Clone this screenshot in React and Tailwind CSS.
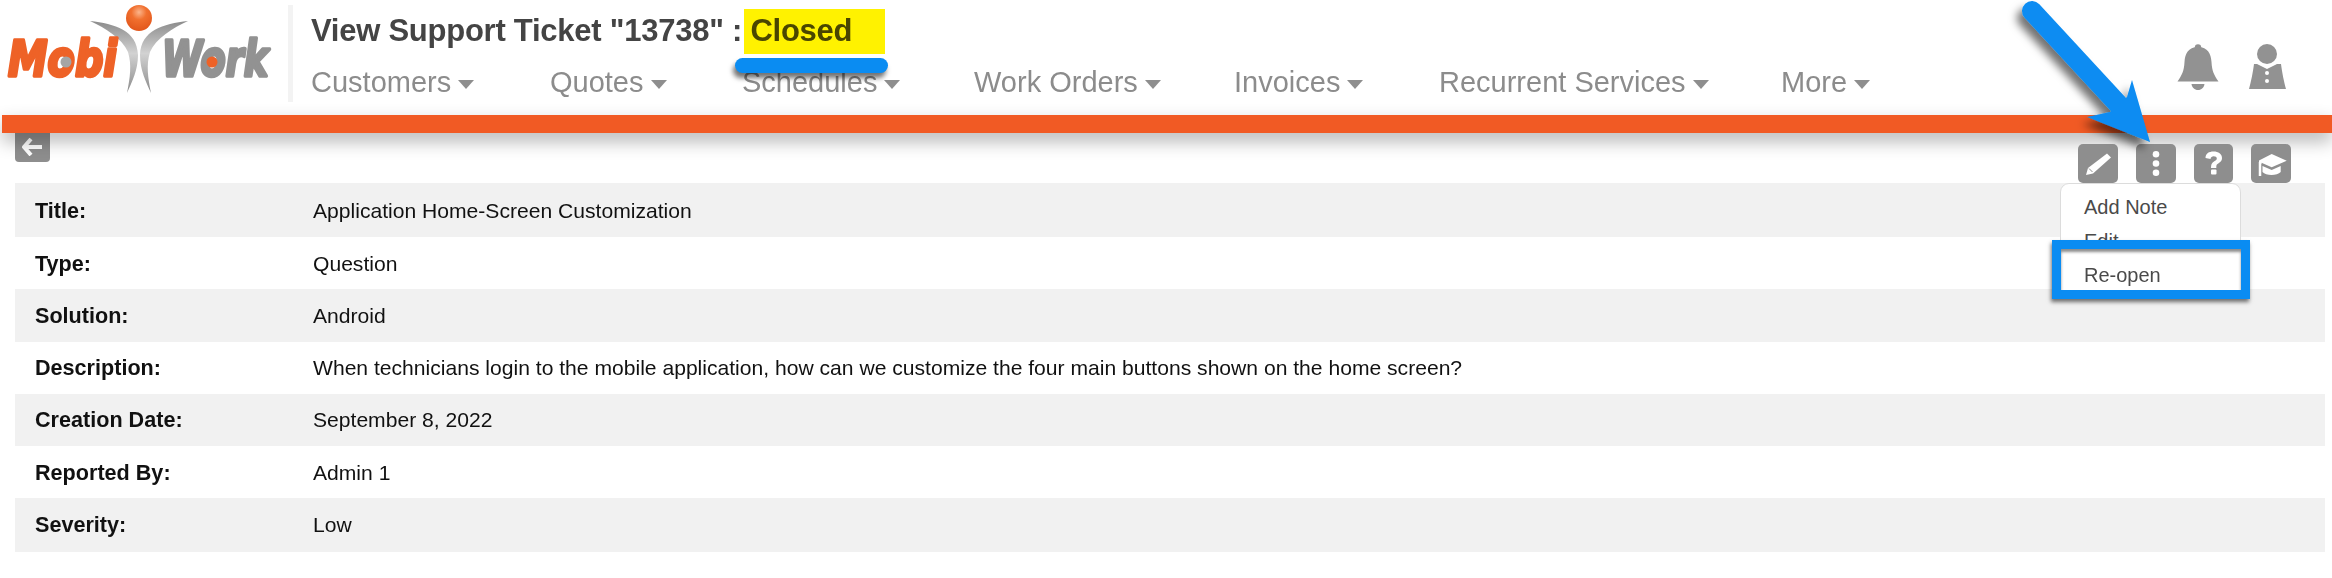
import React from "react";

const navItems = [
  ["Customers", "w-[239px]"],
  ["Quotes", "w-[192px]"],
  ["Schedules", "w-[232px]"],
  ["Work Orders", "w-[260px]"],
  ["Invoices", "w-[205px]"],
  ["Recurrent Services", "w-[342px]"],
  ["More", "w-[100px]"],
];

const rows = [
  ["Title:", "Application Home-Screen Customization", "bg-[#f1f1f1] h-[54px] pt-[2px]"],
  ["Type:", "Question", "bg-white h-[52px] pt-[2px]"],
  ["Solution:", "Android", "bg-[#f1f1f1] h-[53px]"],
  ["Description:", "When technicians login to the mobile application, how can we customize the four main buttons shown on the home screen?", "bg-white h-[52px]"],
  ["Creation Date:", "September 8, 2022", "bg-[#f1f1f1] h-[52px]"],
  ["Reported By:", "Admin 1", "bg-white h-[52px] pt-[2px]"],
  ["Severity:", "Low", "bg-[#f1f1f1] h-[54px]"],
];

function Logo() {
  return (
    <svg width="288" height="110" viewBox="0 0 288 110" className="shrink-0">
      <defs>
        <radialGradient id="ball" cx="50%" cy="28%" r="72%">
          <stop offset="0%" stopColor="#fbb58c" />
          <stop offset="40%" stopColor="#f1702f" />
          <stop offset="100%" stopColor="#e2561b" />
        </radialGradient>
        <linearGradient id="arm" x1="0" y1="0" x2="0" y2="1">
          <stop offset="0%" stopColor="#8b8b8b" />
          <stop offset="45%" stopColor="#d2d2d2" />
          <stop offset="100%" stopColor="#8a8a8a" />
        </linearGradient>
      </defs>
      <circle cx="139" cy="18" r="13" fill="url(#ball)" />
      <path d="M90 21C115 24 137 30 138 55C138 70 132 82 127 93C130 78 132 65 128 52C122 38 105 28 90 21Z" fill="url(#arm)" />
      <path d="M188 21C163 24 141 30 140 55C140 70 146 82 151 93C148 78 146 65 150 52C156 38 173 28 188 21Z" fill="url(#arm)" />
      <text x="8" y="76" fontFamily="'DejaVu Sans', sans-serif" fontWeight="700" fontStyle="italic" fontSize="50" textLength="109" lengthAdjust="spacingAndGlyphs" fill="#ee6227" stroke="#ee6227" strokeWidth="3.5" strokeLinejoin="round">Mobi</text>
      <circle cx="66" cy="62" r="5.500" fill="#a5a5a5" />
      <text x="162" y="76" fontFamily="'DejaVu Sans', sans-serif" fontWeight="700" fontStyle="italic" fontSize="50" textLength="106" lengthAdjust="spacingAndGlyphs" fill="#929292" stroke="#929292" strokeWidth="3.5" strokeLinejoin="round">Work</text>
      <circle cx="212" cy="62" r="5.500" fill="#ee6227" />
    </svg>
  );
}

function Caret() {
  return (
    <svg width="16" height="9" viewBox="0 0 16 9" className="ml-[7px] mt-[5px] shrink-0">
      <path d="M0 0H16L8 9Z" fill="#8e8e8e" />
    </svg>
  );
}

function Bell() {
  return (
    <svg width="42" height="46" viewBox="0 0 42 46">
      <circle cx="21" cy="3.5" r="3.2" fill="#929292" />
      <path d="M21 3C11 3 8 10 7.500 18C7 27 5 31 0.500 37.500H41.500C37 31 35 27 34.500 18C34 10 31 3 21 3Z" fill="#929292" />
      <path d="M14.500 40H27.500C27 43.500 24.500 46 21 46C17.500 46 15 43.500 14.500 40Z" fill="#929292" />
    </svg>
  );
}

function Person() {
  return (
    <svg width="38" height="46" viewBox="0 0 38 46">
      <circle cx="18" cy="10" r="10" fill="#929292" />
      <path d="M8 20L18 25L28 20L32 20C33 28 35 38 37 45H0C2 38 4 28 5 20Z" fill="#929292" />
      <circle cx="18" cy="29" r="2" fill="#fff" />
      <circle cx="18" cy="37" r="2" fill="#fff" />
    </svg>
  );
}

function ToolButton({ children, wide }) {
  return (
    <div className={`${wide ? "w-[40px]" : "w-[39px]"} h-[39px] rounded-[5px] bg-[#8e8e8e] shrink-0`}>
      <svg width="40" height="39" viewBox="0 0 40 39">
        {children}
      </svg>
    </div>
  );
}

export default function App() {
  return (
    <div className="relative w-[2332px] h-[578px] overflow-hidden bg-white font-['Liberation_Sans',Arial,sans-serif]">
      <header className="flex h-[115px] bg-white">
        <Logo />
        <div className="w-[5px] h-[97px] mt-[5px] bg-[#f3f3f3] shrink-0" />
        <div className="flex flex-col pl-[18px] min-w-0">
          <h1 className="h-[62px] pt-[13px] text-[31px] leading-[36px] font-bold text-[#444] tracking-[-0.25px] whitespace-nowrap">
            View Support Ticket "13738" :{" "}
            <span className="text-[#4a4a08]">Closed</span>
          </h1>
          <nav className="flex items-center h-[40px]">
            {navItems.map(([label, w]) => (
              <div key={label} className={`${w} flex items-center text-[29px] leading-[34px] text-[#8c8c8c] whitespace-nowrap`}>
                {label}
                <Caret />
              </div>
            ))}
          </nav>
        </div>
        <div className="ml-auto flex items-start gap-[30px] pt-[44px] pr-[45px]">
          <Bell />
          <Person />
        </div>
      </header>

      <div className="h-[18px] ml-[2px] bg-[#f15a24] relative shadow-[0_8px_18px_rgba(0,0,0,0.3)]" />

      <div className="flex justify-between items-start h-[50px] pl-[15px] pr-[41px]">
        <div className="w-[35px] h-[29px] rounded-b-[4px] bg-[#8e8e8e] flex items-start justify-center pt-[5px]">
          <svg width="22" height="18" viewBox="0 0 22 18">
            <path d="M9 1L2 9L9 17M2.500 9H20" fill="none" stroke="#fff" strokeWidth="4" strokeLinejoin="round" />
          </svg>
        </div>
        <div className="relative flex gap-[18px] pt-[11px]">
          <ToolButton wide>
            <path d="M29 9.500L33 13.500L15 29.500L8 31L10 24Z" fill="#fff" />
            <path d="M11 24.500L14.500 28" stroke="#8e8e8e" strokeWidth="1" />
          </ToolButton>
          <ToolButton wide>
            <circle cx="20" cy="10.300" r="3.300" fill="#fff" />
            <circle cx="20" cy="19.500" r="3.300" fill="#fff" />
            <circle cx="20" cy="28.700" r="3.300" fill="#fff" />
          </ToolButton>
          <ToolButton>
            <path d="M11.500 14C11.500 9.500 15 7.500 19.500 7.500C24.500 7.500 28 10 28 14C28 17.500 25.500 18.500 23.500 20C22.500 20.800 22.300 21.500 22.300 24H17C17 20 18 19 20 17.500C21.500 16.500 22.800 16 22.800 14.500C22.800 13 21.500 12.300 19.700 12.300C18 12.300 16.800 13.200 16.500 15Z" fill="#fff" />
            <rect x="17" y="25.500" width="5.500" height="5" rx="1" fill="#fff" />
          </ToolButton>
          <ToolButton wide>
            <path d="M20.700 10L35.700 16.700L20.700 23.300L10.500 18.800V20L8 19V16.500Z" fill="#fff" />
            <path d="M11.500 22L20.700 26L29.700 22V28C26 32 15 32 11.500 28Z" fill="#fff" />
            <path d="M9 18V32" stroke="#fff" strokeWidth="2.500" />
          </ToolButton>
          <div className="absolute left-[-18px] top-[50px] z-10 w-[181px] h-[112px] rounded-[9px] bg-white border border-[#dcdcdc] pl-[23px] pt-[6px] text-[20px] leading-[34px] text-[#4a4a4a]">
            <div>Add Note</div>
            <div>Edit</div>
          </div>
        </div>
      </div>

      <div className="ml-[15px] mr-[7px]">
        {rows.map(([label, value, cls]) => (
          <div key={label} className={`${cls} flex items-center text-[21.1px] leading-[26px] text-[#111]`}>
            <div className="w-[298px] pl-[20px] font-bold text-[21.6px] shrink-0">{label}</div>
            <div>{value}</div>
          </div>
        ))}
      </div>

      {/* annotations lying over the page */}
      <div className="absolute left-[744px] top-[9px] w-[141px] h-[45px] bg-[#fff200] mix-blend-multiply" />
      <div className="absolute left-[735px] top-[58px] w-[153px] h-[15px] rounded-[8px] bg-[#0a8cf2] shadow-[-2px_5px_5px_rgba(0,0,0,0.55)]" />
      <div className="absolute left-[2052px] top-[240px] z-20 w-[198px] h-[59px] border-[9px] border-[#0a8cf2] bg-white shadow-[-1px_3px_4px_rgba(0,0,0,0.55),inset_0_3px_3px_rgba(0,0,0,0.45)] pl-[23px] pt-[9px] text-[20px] leading-[34px] text-[#4a4a4a]">
        Re-open
      </div>
      <svg className="absolute left-[2000px] top-0 z-20 overflow-visible" width="170" height="150" viewBox="0 0 170 150">
        <defs>
          <filter id="sh" x="-30%" y="-30%" width="160%" height="160%">
            <feDropShadow dx="-5" dy="7" stdDeviation="4" floodColor="#000" floodOpacity="0.55" />
          </filter>
        </defs>
        <g filter="url(#sh)">
          <path d="M32 11L118 104" stroke="#0a8cf2" strokeWidth="20" strokeLinecap="round" />
          <path d="M132 80L150 142L87 117L110 112L127 97Z" fill="#0a8cf2" />
        </g>
      </svg>
    </div>
  );
}
